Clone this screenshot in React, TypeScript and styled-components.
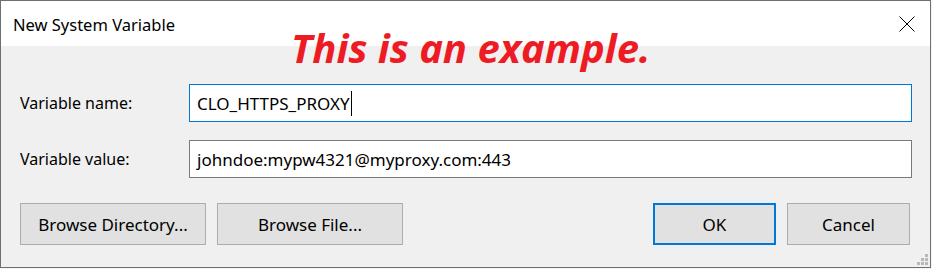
import React from "react";
import styled, { createGlobalStyle } from "styled-components";

const GlobalStyle = createGlobalStyle`
  html, body { margin: 0; padding: 0; background: #f3f3f3; }
  * { box-sizing: border-box; }
`;

const Window = styled.div`
  position: relative;
  width: 931px;
  height: 268px;
  border: 1px solid #6f6f6f;
  display: flex;
  flex-direction: column;
  background: #f0f0f0;
  font-family: "Noto Sans", "Open Sans", sans-serif;
  color: #000;
`;

const TitleBar = styled.div`
  height: 45px;
  background: #fff;
  display: flex;
  align-items: center;
  justify-content: space-between;
  padding-left: 12px;
`;

const Title = styled.span`
  font-size: 16.5px;
  line-height: 20px;
  margin-top: 3px;
`;

const CloseButton = styled.div`
  width: 46px;
  height: 45px;
  display: flex;
  align-items: center;
  justify-content: center;
`;

const Body = styled.div`
  flex: 1;
  display: flex;
  flex-direction: column;
  padding: 38px 18px 22px 19px;
`;

const Field = styled.div<{ $gap?: number }>`
  display: grid;
  grid-template-columns: 169px 1fr;
  align-items: center;
  margin-bottom: ${(p) => p.$gap ?? 0}px;
`;

const Label = styled.span`
  font-size: 16px;
`;

const TextBox = styled.div<{ $focused?: boolean }>`
  height: 38px;
  background: #fff;
  border: 1px solid ${(p) => (p.$focused ? "#0078d7" : "#7a7a7a")};
  display: flex;
  align-items: center;
  padding-left: 7px;
  font-size: 17px;
  white-space: nowrap;
`;

const Caret = styled.span`
  display: inline-block;
  width: 1px;
  height: 25px;
  background: #000;
  margin-left: 1px;
`;

const ButtonRow = styled.div`
  display: flex;
  gap: 11px;
  padding-right: 2px;
`;

const Spacer = styled.div`
  flex: 1;
`;

const Button = styled.div<{ $w: number; $default?: boolean }>`
  width: ${(p) => p.$w}px;
  height: 42px;
  background: #e1e1e1;
  border: ${(p) => (p.$default ? "2px solid #0078d7" : "1px solid #adadad")};
  display: flex;
  align-items: center;
  justify-content: center;
  font-size: 17px;
`;

const Overlay = styled.div`
  position: absolute;
  left: 290px;
  top: 22px;
  color: #ed1c24;
  font-family: "Noto Sans", "Open Sans", sans-serif;
  font-weight: 700;
  font-style: italic;
  font-size: 40px;
  line-height: 50px;
  white-space: nowrap;
`;

const Grip = styled.svg`
  position: absolute;
  right: 1px;
  bottom: 1px;
`;

export default function App() {
  return (
    <>
      <GlobalStyle />
      <Window>
        <TitleBar>
          <Title>New System Variable</Title>
          <CloseButton>
            <svg width="16" height="16" viewBox="0 0 16 16">
              <path d="M0.5 0.5 L15.5 15.5 M15.5 0.5 L0.5 15.5" stroke="#000" strokeWidth="1" fill="none" />
            </svg>
          </CloseButton>
        </TitleBar>
        <Body>
          <Field $gap={18}>
            <Label>Variable name:</Label>
            <TextBox $focused>
              CLO_HTTPS_PROXY
              <Caret />
            </TextBox>
          </Field>
          <Field $gap={25}>
            <Label>Variable value:</Label>
            <TextBox>johndoe:mypw4321@myproxy.com:443</TextBox>
          </Field>
          <ButtonRow>
            <Button $w={186}>Browse Directory...</Button>
            <Button $w={186}>Browse File...</Button>
            <Spacer />
            <Button $w={123} $default>OK</Button>
            <Button $w={123}>Cancel</Button>
          </ButtonRow>
        </Body>
        <Overlay>This is an example.</Overlay>
        <Grip width="12" height="12" viewBox="0 0 12 12">
          <g fill="#b8b8b8">
            <rect x="8" y="0" width="3" height="3" />
            <rect x="4" y="4" width="3" height="3" />
            <rect x="8" y="4" width="3" height="3" />
            <rect x="0" y="8" width="3" height="3" />
            <rect x="4" y="8" width="3" height="3" />
            <rect x="8" y="8" width="3" height="3" />
          </g>
        </Grip>
      </Window>
    </>
  );
}
